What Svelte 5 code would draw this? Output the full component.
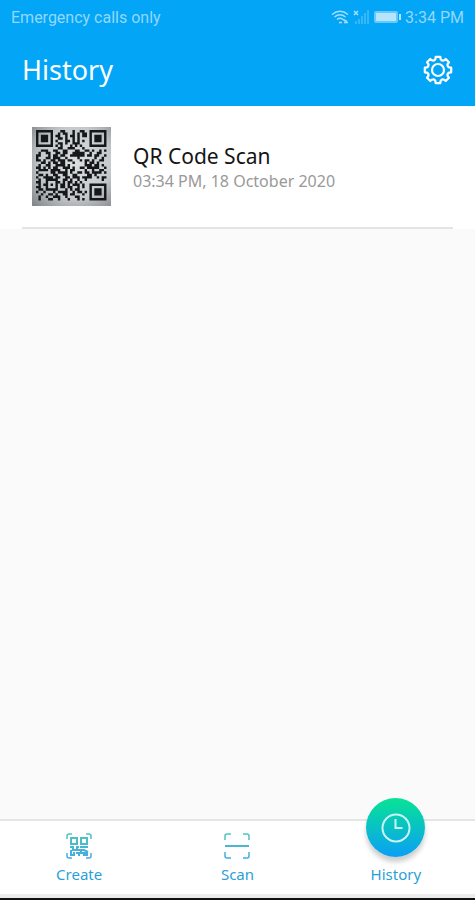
<script>
    let active = 'history';

    const items = [
        { title: 'QR Code Scan', date: '03:34 PM, 18 October 2020' }
    ];

    // one string per row, # is a dark module
    const qr = [
        '#######...##...#..##..#######',
        '#.....#..#.##..#.#.##.#.....#',
        '#.###.#.##..#.##.#.##.#.###.#',
        '#.###.#..##.#..#.#....#.###.#',
        '#.###.#.#...##.#.#.#..#.###.#',
        '#.....#..##.#..###....#.....#',
        '#######.#.#...#.#.#...#######',
        '.........##..###...#.........',
        '..###..##..##...##..##.#..#.#',
        '.#..##..##.##..#####..#..##..',
        '##...#.##.##..######.##.##..#',
        '#...##.###..#....#......#..#.',
        '##.#..##.###.##...#.##.#..##.',
        '..##.#.##.##...#....#.##.#...',
        '.#..##..####.#......###.##.#.',
        '##.#.#.##..###.#..##.#####..#',
        '.####.####..#.##....#..#..##.',
        '#.....##.####.#..##.##.####.#',
        '.##.#..##..##..##....##.#....',
        '#..####.##..##.###.####..#.##',
        '.#..#####..##.#..#..#......#.',
        '##..#...##.#.##.#.#..........',
        '.#.##.#.#.##.#.###.#..#######',
        '##..#...#.##.##..#.#..#.....#',
        '.##.#####...#.#.##....#.###.#',
        '#..#...#.####..#.##.#.#.###.#',
        '..#..##.#..##.##...#..#.###.#',
        '.#..#..###..#...##....#.....#',
        '.#...##..#...#...#.#..#######'
    ];

    const qrPath = qr
        .map((row, y) => [...row].map((c, x) => (c === '#' ? `M${x} ${y}h1v1h-1z` : '')).join(''))
        .join('');

    // outline of the settings cog: eight rounded teeth
    const teeth = 8;
    let gearPath = '';
    for (let i = 0; i < teeth; i++) {
        const point = (r, deg) => {
            const a = ((i * 360) / teeth - 90 + deg) * (Math.PI / 180);
            return `${(15 + r * Math.cos(a)).toFixed(2)} ${(15 + r * Math.sin(a)).toFixed(2)}`;
        };
        gearPath += `${i ? 'L' : 'M'}${point(11.4, -13)}L${point(13.4, -10)}L${point(13.4, 10)}L${point(11.4, 13)}Q${point(9.6, 22.5)} ${point(11.4, 32)}`;
    }
    gearPath += 'Z';
</script>

<div class="screen">
    <header>
        <div class="status">
            <span>Emergency calls only</span>
            <div class="status-right">
                <svg class="wifi" width="18" height="14" viewBox="0 0 18 14" aria-hidden="true">
                    <path d="M1 4.5Q9 -2 17 4.5M3.5 7Q9 2.5 14.5 7M6 9.5Q9 7 12 9.5" />
                    <path d="M8 12.5h3M13 12.5h4M12 9.5l4 2" />
                </svg>
                <svg class="signal" width="17" height="14" viewBox="0 0 17 14" aria-hidden="true">
                    <path class="bars" d="M2 14v-3h2v3zM5 14V9h2v5zM8 14V6h2v8zM11 14V3h2v11zM14 14V0h2v14z" />
                    <path class="cross" d="M1 1l4 4M5 1l-4 4" />
                </svg>
                <svg class="battery" width="27" height="14" viewBox="0 0 27 14" aria-hidden="true">
                    <rect class="case" x="0.5" y="1.5" width="23" height="11" rx="1" />
                    <rect class="level" x="2" y="3" width="20" height="8" />
                    <rect class="level" x="25" y="4" width="2" height="6" />
                </svg>
                <span>3:34 PM</span>
            </div>
        </div>
        <div class="title-bar">
            <h1>History</h1>
            <button class="settings" type="button" aria-label="Settings">
                <svg width="30" height="30" viewBox="0 0 30 30" aria-hidden="true">
                    <path d={gearPath} />
                    <circle cx="15" cy="15" r="6" />
                </svg>
            </button>
        </div>
    </header>

    <main>
        <ul>
            {#each items as item}
                <li>
                    <div class="entry">
                        <svg class="thumb" width="79" height="79" viewBox="0 0 79 79" aria-hidden="true">
                            <defs>
                                <radialGradient id="paper" cx="0.55" cy="0.45" r="0.75">
                                    <stop offset="0" stop-color="#dcdfe0" />
                                    <stop offset="0.6" stop-color="#c5c9cb" />
                                    <stop offset="1" stop-color="#83878b" />
                                </radialGradient>
                            </defs>
                            <rect width="79" height="79" fill="url(#paper)" />
                            <path transform="translate(4 3) scale(2.43)" d={qrPath} fill="#15171a" />
                        </svg>
                        <div class="text">
                            <h2>{item.title}</h2>
                            <p>{item.date}</p>
                        </div>
                    </div>
                </li>
            {/each}
        </ul>
    </main>

    <nav>
        <button type="button" class:active={active === 'create'} on:click={() => (active = 'create')}>
            <svg class="icon" width="26" height="26" viewBox="0 0 26 26" aria-hidden="true">
                <defs>
                    <linearGradient id="tint" gradientUnits="userSpaceOnUse" x1="0" y1="0" x2="0" y2="26">
                        <stop offset="0" stop-color="#4fc6bb" />
                        <stop offset="1" stop-color="#45a9e6" />
                    </linearGradient>
                </defs>
                <g fill="none" stroke="url(#tint)">
                    <path d="M1 6V3q0-2 2-2h3M20 1h3q2 0 2 2v3M1 20v3q0 2 2 2h3M20 25h3q2 0 2-2v-3" />
                    <path stroke-width="2" d="M5 5h6v6H5zM15 5h6v6h-6z" />
                    <path stroke-width="2" d="M4 14h3v3h4v-3h2M5 17v5h3v-3M10 20h3v3M14 14h8M15 17h3l4 2M12 17h3v3h7M17 22h5" />
                </g>
            </svg>
            <span>Create</span>
        </button>
        <button type="button" class:active={active === 'scan'} on:click={() => (active = 'scan')}>
            <svg class="icon" width="26" height="26" viewBox="0 0 26 26" aria-hidden="true">
                <g fill="none" stroke="url(#tint)">
                    <path d="M1 7V3q0-2 2-2h4M19 1h4q2 0 2 2v4M1 19v4q0 2 2 2h4M19 25h4q2 0 2-2v-4" />
                    <path stroke-width="2" d="M1 13h24" />
                </g>
            </svg>
            <span>Scan</span>
        </button>
        <button type="button" class:active={active === 'history'} on:click={() => (active = 'history')}>
            <div class="bubble">
                <svg width="30" height="30" viewBox="0 0 30 30" aria-hidden="true">
                    <circle cx="15" cy="15" r="13.5" />
                    <path d="M14.5 6v9h7" />
                </svg>
            </div>
            <span>History</span>
        </button>
    </nav>
</div>

<style>
    :global(body) {
        margin: 0;
        background: #fafafa;
    }

    .screen {
        display: flex;
        flex-direction: column;
        min-height: 100vh;
        box-sizing: border-box;
        border-bottom: 2px solid #111;
        font-family: "Noto Sans", "Open Sans", sans-serif;
    }

    header {
        background: #03a5f7;
        color: white;
    }

    .status {
        display: flex;
        justify-content: space-between;
        align-items: center;
        height: 34px;
        padding: 0 11px;
        font-family: Roboto, sans-serif;
        font-size: 16px;
        color: #92d8fc;
    }

    .status-right {
        display: flex;
        align-items: center;
        gap: 4px;
    }

    .wifi,
    .cross {
        fill: none;
        stroke: #a5dffc;
        stroke-width: 1.5;
    }

    .bars {
        fill: #35b7f9;
    }

    .case {
        fill: #67c9fa;
        stroke: #67c9fa;
    }

    .level {
        fill: #b5e5fd;
    }

    .title-bar {
        display: flex;
        justify-content: space-between;
        align-items: center;
        height: 72px;
        padding: 0 22px;
    }

    h1 {
        margin: 0;
        font-size: 27px;
        font-weight: 400;
        line-height: 36px;
    }

    button {
        border: none;
        padding: 0;
        background: none;
        font: inherit;
        cursor: pointer;
    }

    .settings {
        display: flex;
    }

    .settings svg {
        fill: none;
        stroke: white;
        stroke-width: 2.2;
        stroke-linejoin: round;
    }

    main {
        flex: 1;
        background: #fafafa;
    }

    ul {
        margin: 0;
        padding: 0;
        list-style: none;
    }

    li {
        padding: 0 22px;
        background: white;
    }

    .entry {
        display: flex;
        gap: 22px;
        padding: 21px 10px;
        border-bottom: 2px solid #e4e4e4;
    }

    .thumb {
        flex: none;
    }

    .text {
        padding-top: 15px;
    }

    h2 {
        margin: 0;
        font-size: 21px;
        font-weight: 400;
        line-height: 28px;
        color: #151515;
    }

    p {
        margin: 0;
        font-size: 16px;
        line-height: 22px;
        color: #999;
    }

    nav {
        display: grid;
        grid-template-columns: repeat(3, 1fr);
        grid-template-rows: minmax(0, 1fr);
        height: 74px;
        padding-bottom: 3px;
        background: white;
        border-top: 2px solid #e3e6e7;
        box-shadow: inset 0 -4px 0 #ececec;
    }

    /* the active bubble grows upwards out of the bar */
    nav button {
        display: flex;
        flex-direction: column;
        align-items: center;
        justify-content: flex-end;
        gap: 5px;
        min-height: 0;
        padding-bottom: 11px;
        font-size: 15px;
        line-height: 20px;
        color: #2a9fd8;
    }

    .icon {
        flex: none;
        stroke-width: 1.5;
    }

    .bubble {
        display: flex;
        flex: none;
        align-items: center;
        justify-content: center;
        width: 59px;
        height: 59px;
        margin-bottom: 2px;
        border-radius: 50%;
        background: linear-gradient(#08e395, #0a9ff5);
        box-shadow: 0 5px 5px rgba(0, 0, 0, 0.2);
    }

    .bubble svg {
        fill: none;
        stroke: #c9f5f4;
        stroke-width: 2;
    }
</style>
